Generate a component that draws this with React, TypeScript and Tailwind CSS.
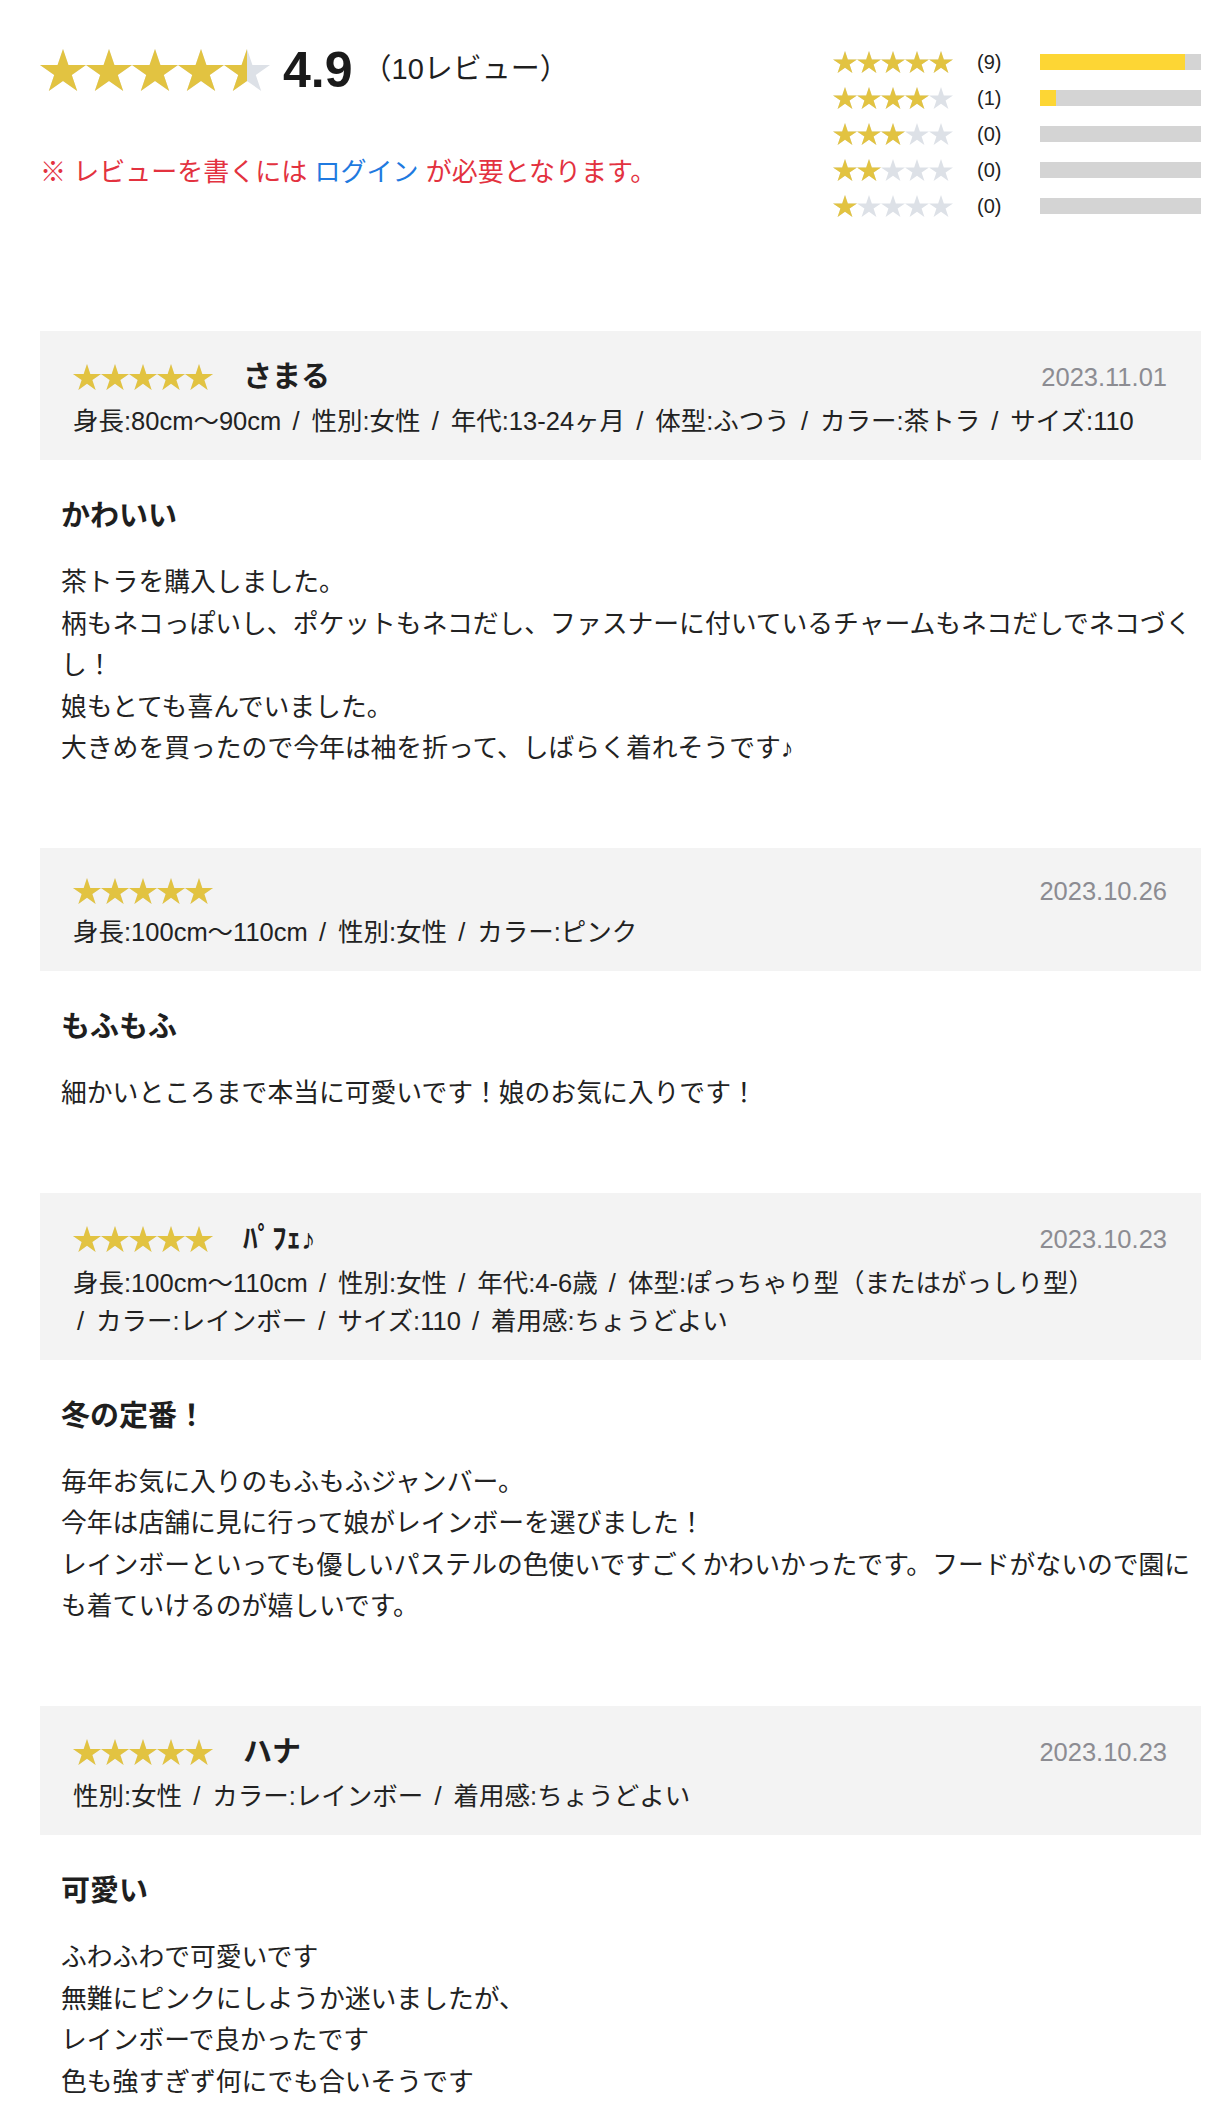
import React, { useId } from "react";

const STAR_POINTS =
  "50,0 61.23,34.55 97.55,34.55 68.16,55.9 79.39,90.45 50,69.1 20.61,90.45 31.84,55.9 2.45,34.55 38.77,34.55";

type StarProps = {
  fill: number;
  className: string;
};

const Star: React.FC<StarProps> = ({ fill, className }) => {
  const id = "clip" + useId().replace(/[^a-zA-Z0-9]/g, "");
  return (
    <svg viewBox="2.45 0 95.1 90.45" preserveAspectRatio="none" className={className}>
      <defs>
        <clipPath id={id}>
          <rect x="0" y="0" width={2.45 + 95.1 * fill} height="100" />
        </clipPath>
      </defs>
      <polygon points={STAR_POINTS} fill="#dde1e7" />
      <polygon points={STAR_POINTS} fill="#e2c341" clipPath={`url(#${id})`} />
    </svg>
  );
};

const Stars: React.FC<{ value: number; size: string }> = ({ value, size }) => {
  return (
    <div className="flex shrink-0">
      {[0, 1, 2, 3, 4].map((i) => (
        <Star key={i} fill={Math.max(0, Math.min(1, value - i))} className={size} />
      ))}
    </div>
  );
};

const distribution = [
  { stars: 5, count: 9 },
  { stars: 4, count: 1 },
  { stars: 3, count: 0 },
  { stars: 2, count: 0 },
  { stars: 1, count: 0 },
];

type Review = {
  name?: string;
  date: string;
  meta: string[];
  title: string;
  body: string;
};

const reviews: Review[] = [
  {
    name: "さまる",
    date: "2023.11.01",
    meta: ["身長:80cm〜90cm", "性別:女性", "年代:13-24ヶ月", "体型:ふつう", "カラー:茶トラ", "サイズ:110"],
    title: "かわいい",
    body:
      "茶トラを購入しました。\n柄もネコっぽいし、ポケットもネコだし、ファスナーに付いているチャームもネコだしでネコづくし！\n娘もとても喜んでいました。\n大きめを買ったので今年は袖を折って、しばらく着れそうです♪",
  },
  {
    date: "2023.10.26",
    meta: ["身長:100cm〜110cm", "性別:女性", "カラー:ピンク"],
    title: "もふもふ",
    body: "細かいところまで本当に可愛いです！娘のお気に入りです！",
  },
  {
    name: "ﾊﾟﾌｪ♪",
    date: "2023.10.23",
    meta: [
      "身長:100cm〜110cm",
      "性別:女性",
      "年代:4-6歳",
      "体型:ぽっちゃり型（またはがっしり型）",
      "カラー:レインボー",
      "サイズ:110",
      "着用感:ちょうどよい",
    ],
    title: "冬の定番！",
    body:
      "毎年お気に入りのもふもふジャンバー。\n今年は店舗に見に行って娘がレインボーを選びました！\nレインボーといっても優しいパステルの色使いですごくかわいかったです。フードがないので園にも着ていけるのが嬉しいです。",
  },
  {
    name: "ハナ",
    date: "2023.10.23",
    meta: ["性別:女性", "カラー:レインボー", "着用感:ちょうどよい"],
    title: "可愛い",
    body:
      "ふわふわで可愛いです\n無難にピンクにしようか迷いましたが、\nレインボーで良かったです\n色も強すぎず何にでも合いそうです",
  },
];

const ReviewCard: React.FC<{ review: Review }> = ({ review }) => {
  return (
    <div>
      <div className="bg-[#f3f3f3] pl-[33px] pr-[34px] pt-[23px] pb-[20px]">
        <div className="flex items-center justify-between">
          <div className="flex items-center">
            <Stars value={5} size="w-[28px] h-[26px]" />
            {review.name && (
              <span className="ml-[30px] text-[29px] leading-[46px] font-bold text-[#1f1f1f]">
                {review.name}
              </span>
            )}
          </div>
          <span className="text-[25.5px] leading-[40px] text-[#8c8c92]">{review.date}</span>
        </div>
        <p className="mt-[2px] text-[25.5px] leading-[38px] text-[#222]">
          {review.meta.map((m, i) => (
            <React.Fragment key={m}>
              {i > 0 && " "}
              <span className="whitespace-nowrap">
                {i > 0 && <span className="ml-[4px] mr-[12px]">/</span>}
                {m}
              </span>
            </React.Fragment>
          ))}
        </p>
      </div>
      <div className="pl-[21px] pt-[33px] pb-[78px]">
        <h3 className="text-[29px] leading-[46px] font-bold text-[#1f1f1f]">{review.title}</h3>
        <p className="mt-[23px] text-[25.8px] leading-[41.6px] whitespace-pre-line text-[#222]">
          {review.body}
        </p>
      </div>
    </div>
  );
};

const App: React.FC = () => {
  return (
    <div className="w-[1232px] min-h-[2120px] bg-white font-['Liberation_Sans','Noto_Sans_CJK_JP',sans-serif] text-[#222]">
      <div className="ml-[40px] w-[1161px]">
        <section className="flex justify-between pt-[44px]">
          <div>
            <div className="flex items-center h-[52px]">
              <Stars value={4.5} size="w-[46px] h-[42px]" />
              <span className="ml-[13px] text-[50px] leading-none font-bold text-[#1a1a1a]">4.9</span>
              <span className="ml-[10px] text-[29px] text-[#1f1f1f]">（10レビュー）</span>
            </div>
            <p className="mt-[57px] text-[26px] leading-[38px] text-[#e3323f]">
              ※ レビューを書くには <span className="text-[#1f7ae0]">ログイン</span> が必要となります。
            </p>
          </div>
          <div className="flex flex-col">
            {distribution.map((d) => (
              <div key={d.stars} className="flex items-center h-[36px]">
                <Stars value={d.stars} size="w-[24px] h-[22px]" />
                <span className="ml-[24px] w-[63px] text-[20px] text-[#222]">({d.count})</span>
                <div className="w-[161px] h-[16px] bg-[#d4d4d4]">
                  <div className="h-full bg-[#fdd634]" style={{ width: `${d.count * 10}%` }} />
                </div>
              </div>
            ))}
          </div>
        </section>
        <div className="mt-[107px]">
          {reviews.map((r) => (
            <ReviewCard key={r.date + r.title} review={r} />
          ))}
        </div>
      </div>
    </div>
  );
};

export default App;
